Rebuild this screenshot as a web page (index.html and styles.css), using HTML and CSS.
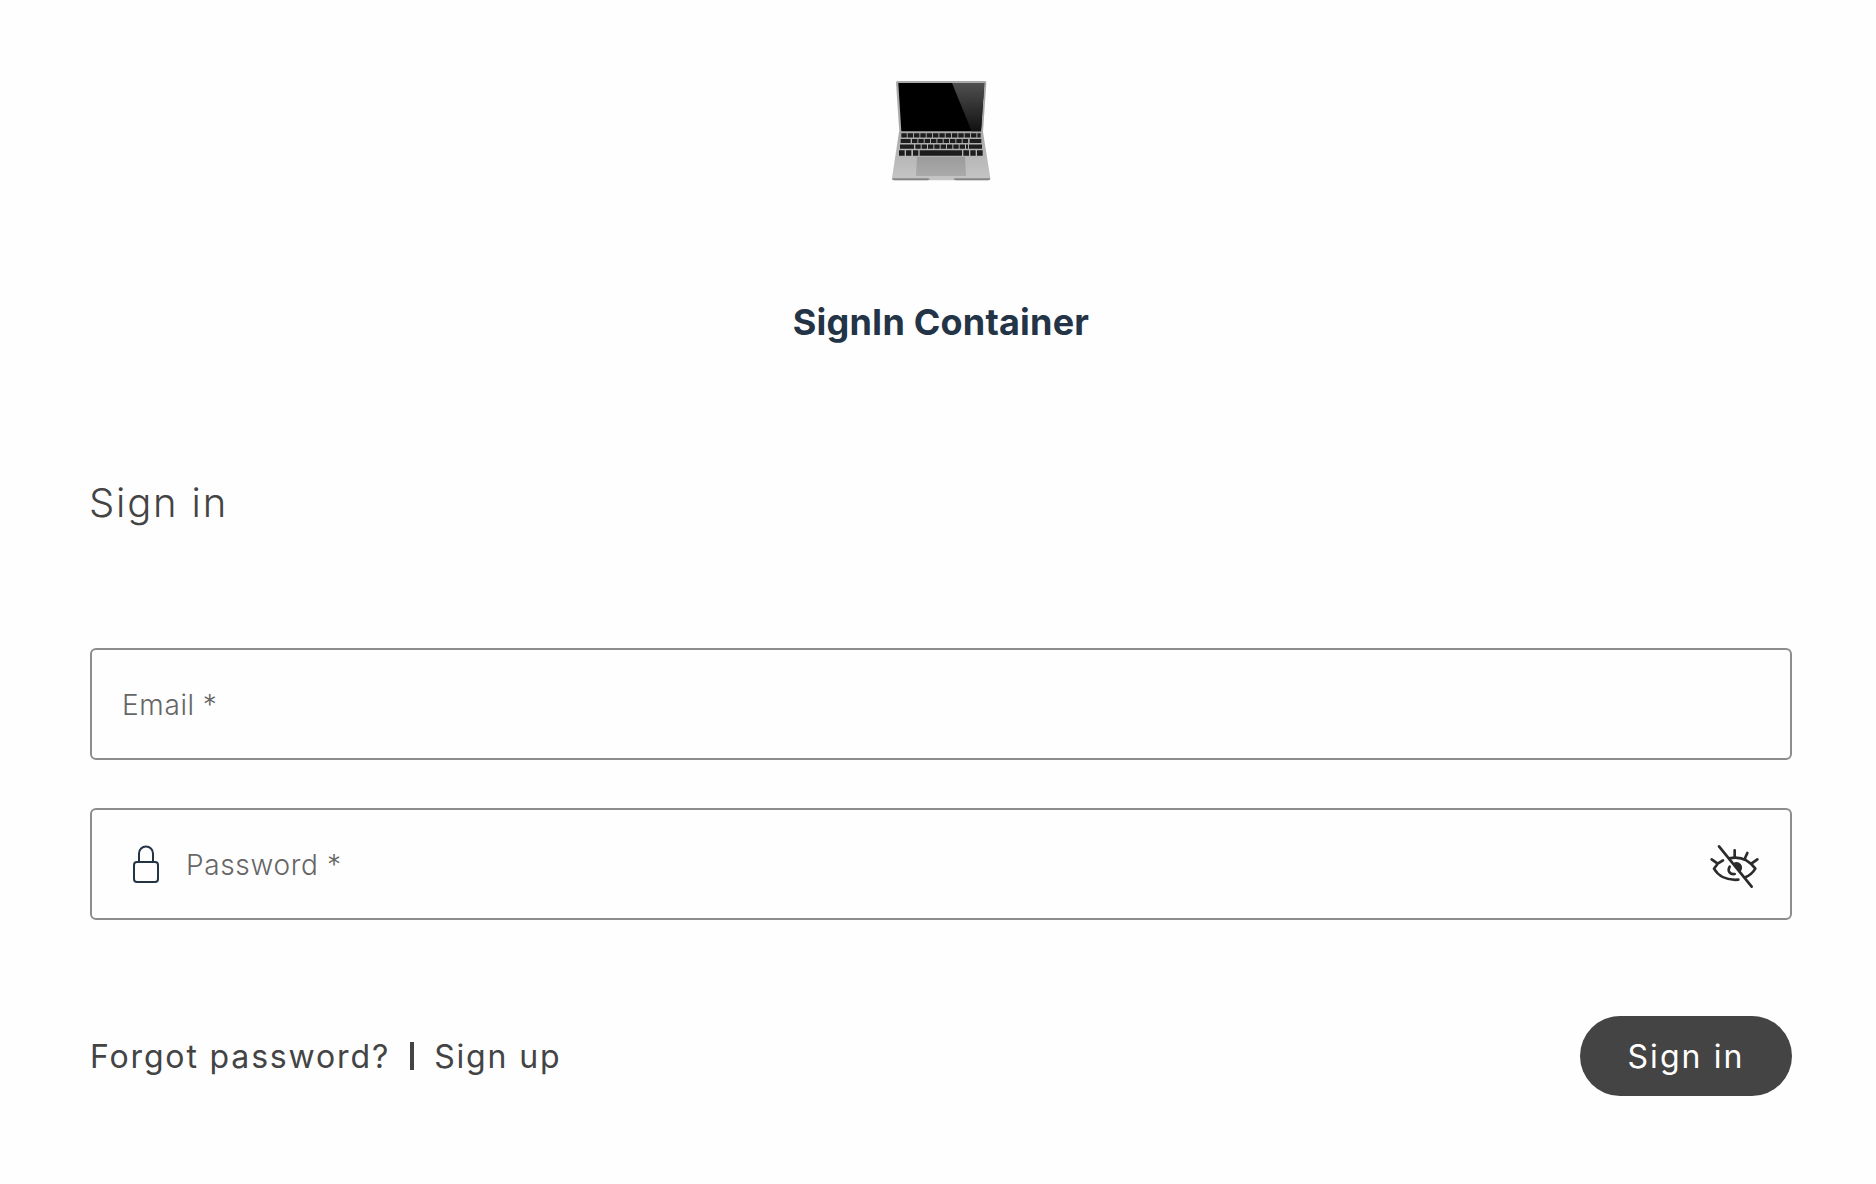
FILE: index.html
```html
<!DOCTYPE html>
<html lang="en">
<head>
<meta charset="utf-8">
<title>Sign in</title>
<link rel="stylesheet" href="styles.css">
</head>
<body>
<main class="page">
  <header class="brand">
    <svg class="laptop" viewBox="0 0 366 360" role="img" aria-label="Laptop">
      <defs>
        <linearGradient id="glare" x1="0" y1="0" x2="0" y2="1"><stop offset="0" stop-color="#505050"/><stop offset="1" stop-color="#111"/></linearGradient>
        <linearGradient id="metal" x1="0" y1="0" x2="0" y2="1"><stop offset="0" stop-color="#a9a9a9"/><stop offset="1" stop-color="#c5c5c5"/></linearGradient>
        <linearGradient id="pad" x1="0" y1="0" x2="0" y2="1"><stop offset="0" stop-color="#9b9b9b"/><stop offset="1" stop-color="#aaa"/></linearGradient>
      </defs>
      <path fill="#aaa" d="M53 33H315Q319 33 319 38L309 187H58L48 38Q48 33 53 33Z"/>
      <path fill="#000" d="M55 39H313L303 184H64Z"/>
      <path fill="url(#glare)" d="M216 39H313L303 184H275Z"/>
      <path fill="url(#metal)" d="M57 186H309L331 324Q331 331 325 331H43Q36 331 36 324Z"/>
      <path fill="url(#pad)" d="M111 260H255L258 318H108Z"/>
      <g fill="none" stroke="#1d1d1d" stroke-width="12.5">
        <path stroke-dasharray="16.2 2.8" d="M64 196H302"/>
        <path d="M62 213H92M269 213H304"/>
        <path stroke-dasharray="16.2 2.8" d="M96 213H266"/>
        <path d="M60 230H102M267 230H306"/>
        <path stroke-dasharray="16 3" d="M106 230H264"/>
        <path stroke-width="16" d="M57 249H74M78 249H94M99 249H115M119 249H246M250 249H267M271 249H287M291 249H308"/>
      </g>
      <path fill="#858585" d="M36 325H143L152 328H219L226 325H331Q331 331 325 331H228L220 328H150L142 331H43Q36 331 36 325Z"/>
    </svg>
    <h1 class="title">SignIn Container</h1>
  </header>
  <form class="form">
    <h2 class="heading">Sign in</h2>
    <label class="field"><span class="email-label">Email *</span></label>
    <label class="field field-password">
      <svg class="lock" viewBox="0 0 28 40" fill="none" stroke="#243447" stroke-width="2">
        <rect x="2" y="18" width="24" height="20" rx="3"/>
        <path d="M7 18V9.5a7 7 0 0 1 14 0V18"/>
      </svg>
      <span class="password-label">Password *</span>
      <svg class="eye" viewBox="0 0 150 138" fill="none" stroke="#2b2b2b" stroke-width="8" stroke-linecap="round" stroke-linejoin="round">
        <path d="M30 10 128 131"/>
        <path d="M8 49 26 62 42 52M26 62 15 77C27 98 52 113 88 110"/>
        <path d="M61 46C93 39 119 50 139 77C131 90 121 98 109 103"/>
        <path d="M77 22V41M115 30 108 46M145 49 127 62"/>
        <path d="M62 71C54 85 64 95 77 93"/>
        <path fill="#2b2b2b" d="M78 62C90 59 98 68 94 80Z"/>
      </svg>
    </label>
    <div class="actions">
      <nav class="links">
        <a class="link">Forgot password?</a>
        <span class="divider"></span>
        <a class="link">Sign up</a>
      </nav>
      <button class="submit" type="button">Sign in</button>
    </div>
  </form>
</main>
</body>
</html>
```
FILE: styles.css
```css
* { box-sizing: border-box; }
body {
  margin: 0;
  background: #fefefe;
  color: #444;
  font-family: Inter, "Liberation Sans", sans-serif;
}
.page { padding: 70px 84px 0 90px; height: 1184px; }
.brand { display: flex; flex-direction: column; align-items: center; }
.laptop { display: block; width: 122px; height: 120px; }
.title {
  margin: 110px 0 0;
  font-size: 36px;
  line-height: 44px;
  font-weight: 700;
  letter-spacing: 0.2px;
  color: #243447;
}
.form { display: flex; flex-direction: column; }
.heading {
  margin: 134px 0 0 -1px;
  font-size: 40px;
  line-height: 50px;
  font-weight: 300;
  letter-spacing: 1.8px;
}
.field {
  display: flex;
  align-items: center;
  height: 112px;
  margin-top: 120px;
  padding: 0 30px;
  border: 2px solid #8d8d8d;
  border-radius: 6px;
  font-size: 28px;
  font-weight: 300;
  letter-spacing: 0.65px;
  color: #666;
}
.field-password { margin-top: 48px; padding: 0 31px 0 40px; }
.lock { width: 28px; height: 40px; }
.email-label { padding-top: 1px; word-spacing: -0.5px; }
.password-label { margin-left: 26px; padding-top: 1px; }
.eye { width: 50px; height: 46px; margin: 4px 0 0 auto; }
.actions { display: flex; align-items: center; justify-content: space-between; margin-top: 96px; }
.links { display: flex; align-items: center; font-size: 32px; letter-spacing: 1.85px; }
.link { padding-top: 1px; font-weight: 370; }
.divider { width: 4px; height: 28px; margin: 0 20px; background: #444; }
.submit {
  width: 212px;
  height: 80px;
  padding: 1px 0 0;
  border: 0;
  border-radius: 40px;
  background: #444;
  color: #fff;
  font: 370 32px Inter, "Liberation Sans", sans-serif;
  letter-spacing: 2.1px;
}
```
